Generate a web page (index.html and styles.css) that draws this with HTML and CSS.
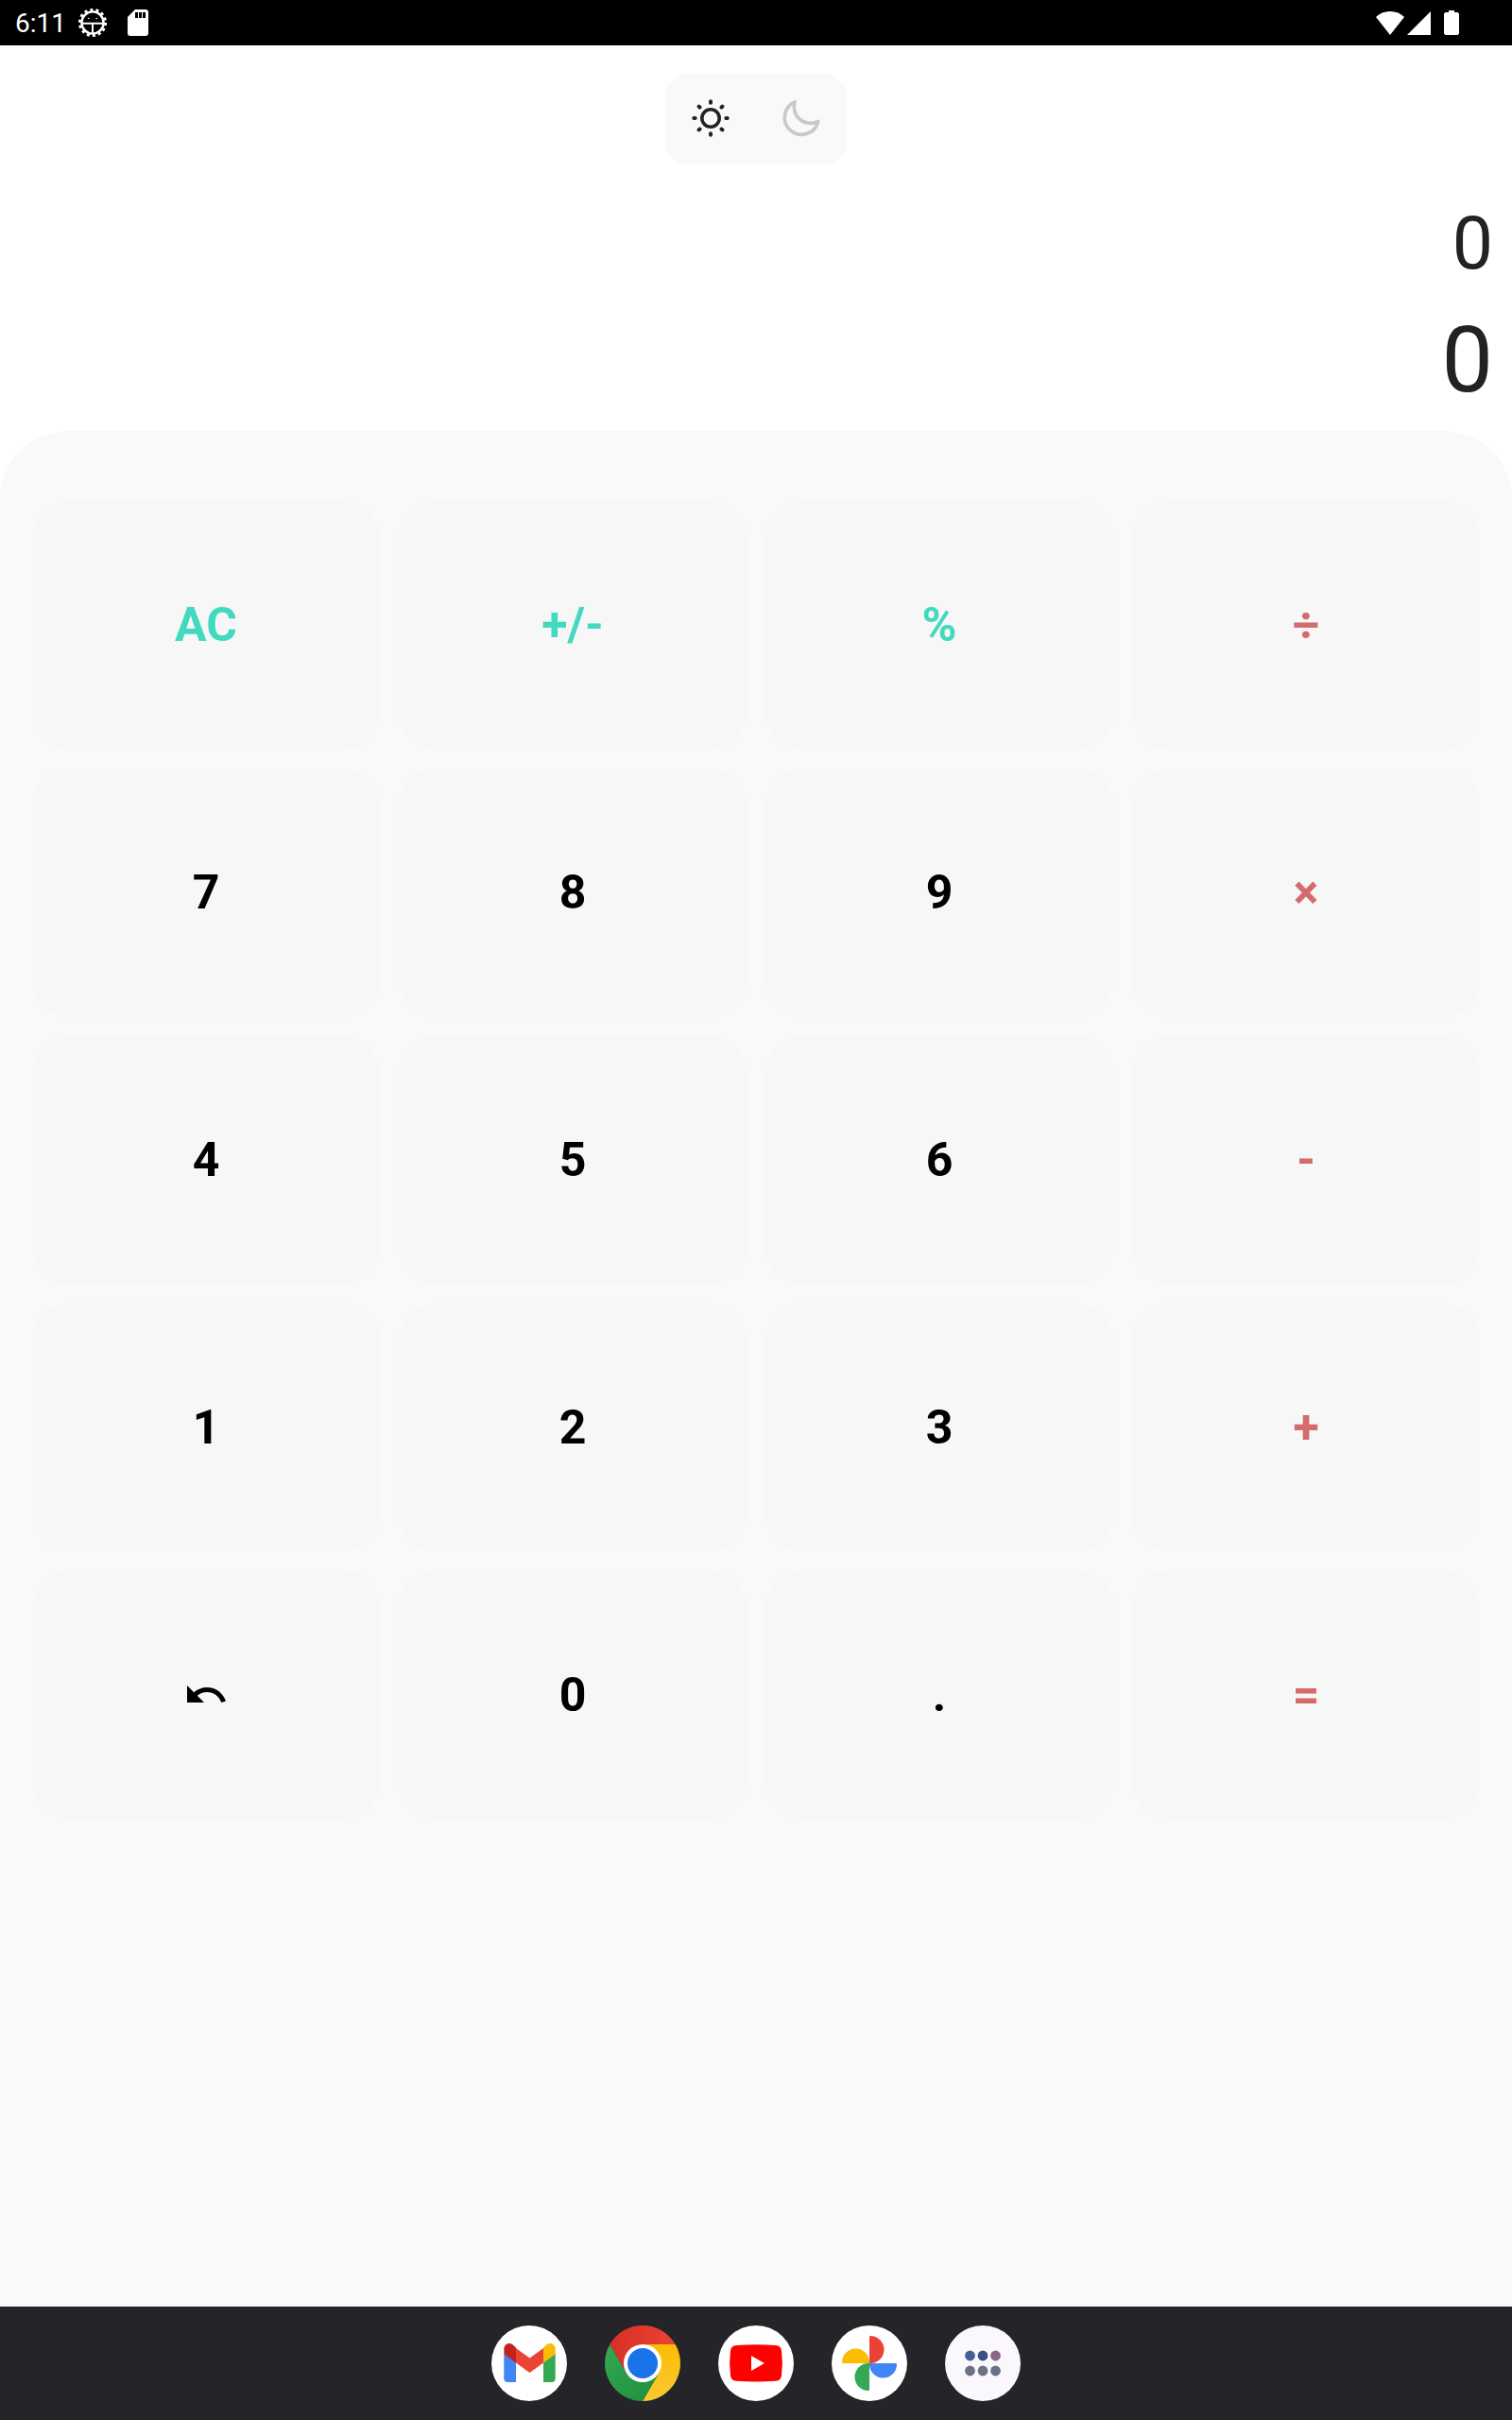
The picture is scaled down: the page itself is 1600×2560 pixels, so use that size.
FILE: index.html
```html
<!DOCTYPE html>
<html lang="en">
<head>
<meta charset="utf-8">
<meta name="viewport" content="width=device-width, initial-scale=1">
<title>Calculator</title>
<link rel="stylesheet" href="styles.css">
</head>
<body>
<header class="status">
  <div class="status-left">
    <time class="clock">6:11</time>
    <svg class="gear" viewBox="0 0 32 32" aria-hidden="true">
      <circle cx="16" cy="16" r="13.6" fill="none" stroke="#fff" stroke-width="3" stroke-dasharray="3 3.103"/>
      <circle cx="16" cy="16" r="11.600" fill="none" stroke="#fff" stroke-width="2.400"/>
      <path d="M5 16.700H27M16 17v10" fill="none" stroke="#fff" stroke-width="2"/>
      <circle cx="11.700" cy="11.500" r=".8" fill="#fff"/><circle cx="20.300" cy="11.500" r=".8" fill="#fff"/>
    </svg>
    <svg class="sd" viewBox="0 0 22 28" aria-hidden="true">
      <path fill="#fff" fill-rule="evenodd" d="M8 0h11a3 3 0 0 1 3 3v22a3 3 0 0 1-3 3H3a3 3 0 0 1-3-3V8zM8 3v6h3V3zM12 3v6h3V3zM16 3v6h3V3z"/>
    </svg>
  </div>
  <div class="status-right">
    <svg class="wifi" viewBox="0 0 30 25" aria-hidden="true"><path fill="#fff" d="M0 6Q6 0 15 0t15 6L15 25z"/></svg>
    <svg class="signal" viewBox="0 0 25 25" aria-hidden="true"><path fill="#fff" d="M25 0v25H0z"/></svg>
    <svg class="battery" viewBox="0 0 16 26" aria-hidden="true"><path fill="#fff" d="M5 0h6v2h3.500L16 3.500v21L14.500 26h-13L0 24.500v-21L1.500 2H5z"/></svg>
  </div>
</header>

<main class="calculator">
  <div class="theme" role="group" aria-label="Theme">
    <button class="theme-option" type="button" aria-label="Light" aria-pressed="true">
      <svg class="icon" viewBox="0 0 48 48" fill="none" stroke="#222" aria-hidden="true">
        <circle cx="24" cy="23" r="9.200" stroke-width="3.600"/>
        <path stroke-width="4" stroke-linecap="round" d="M24 5.300v1.400M24 39.300v1.400M6.300 23h1.400M40.300 23h1.400M11.600 10.600l.9.900M35.500 34.500l.9.900M11.600 35.400l.9-.9M35.500 11.500l.9-.9"/>
      </svg>
    </button>
    <button class="theme-option" type="button" aria-label="Dark" aria-pressed="false">
      <svg class="icon" viewBox="0 0 48 48" fill="none" stroke="#c8c8c8" aria-hidden="true">
        <path stroke-width="3.600" stroke-linejoin="round" d="M17 5.800A18 18 0 1 0 41.800 26.300A17.400 17.400 0 0 1 17 5.800z"/>
      </svg>
    </button>
  </div>
  <div class="display">
    <div class="expression">0</div>
    <output class="result">0</output>
  </div>
  <section class="keypad" aria-label="Keypad">
    <button class="key key-action" type="button">AC</button>
    <button class="key key-action" type="button">+/-</button>
    <button class="key key-action" type="button">%</button>
    <button class="key key-operator" type="button">÷</button>
    <button class="key" type="button">7</button>
    <button class="key" type="button">8</button>
    <button class="key" type="button">9</button>
    <button class="key key-operator" type="button">×</button>
    <button class="key" type="button">4</button>
    <button class="key" type="button">5</button>
    <button class="key" type="button">6</button>
    <button class="key key-operator" type="button">-</button>
    <button class="key" type="button">1</button>
    <button class="key" type="button">2</button>
    <button class="key" type="button">3</button>
    <button class="key key-operator" type="button">+</button>
    <button class="key" type="button" aria-label="Undo">
      <svg class="icon" viewBox="0 0 24 24" aria-hidden="true"><path d="M12.500 8c-2.650 0-5.050.99-6.900 2.600L2 7v9h9l-3.620-3.620c1.390-1.160 3.160-1.880 5.120-1.880 3.540 0 6.550 2.310 7.600 5.500l2.370-.78C21.080 11.030 17.150 8 12.500 8z"/></svg>
    </button>
    <button class="key" type="button">0</button>
    <button class="key" type="button">.</button>
    <button class="key key-operator" type="button">=</button>
  </section>
</main>

<nav class="dock" aria-label="Apps">
  <button class="app" type="button" aria-label="Gmail">
    <svg class="app-icon" viewBox="0 0 80 80" aria-hidden="true">
      <circle cx="40" cy="40" r="40" fill="#fff"/>
      <path fill="#4285f4" d="M13.300 30l12.700 8v22h-8.700a4 4 0 0 1-4-4z"/>
      <path fill="#34a853" d="M67.700 30L55 38v22h8.700a4 4 0 0 0 4-4z"/>
      <path fill="#ea4335" d="M26 24l14.500 10.500L55 24v15.500L40.500 50 26 39.500z"/>
      <path fill="#c5221f" d="M13.300 25c0-5 5.200-7.600 9.200-4.700L26 23.500v16l-12.700-9.200z"/>
      <path fill="#fbbc04" d="M67.700 25c0-5-5.200-7.600-9.200-4.700L55 23.500v16l12.700-9.200z"/>
    </svg>
  </button>
  <button class="app" type="button" aria-label="Chrome">
    <svg class="app-icon" viewBox="0 0 80 80" aria-hidden="true">
      <defs>
        <linearGradient id="red"><stop stop-color="#d93025"/><stop offset="1" stop-color="#ea4335"/></linearGradient>
        <linearGradient id="yellow" x2="0" y2="1"><stop stop-color="#fbbc04"/><stop offset="1" stop-color="#fcc934"/></linearGradient>
        <linearGradient id="green" x2="1" y2="1"><stop stop-color="#34a853"/><stop offset="1" stop-color="#1e8e3e"/></linearGradient>
      </defs>
      <path fill="url(#red)" d="M5.360 20A40 40 0 0 1 74.640 20H40L22.680 50z"/>
      <path fill="url(#yellow)" d="M74.640 20A40 40 0 0 1 40 80L57.320 50 40 20z"/>
      <path fill="url(#green)" d="M40 80A40 40 0 0 1 5.360 20L22.680 50H57.320z"/>
      <circle cx="40" cy="40" r="20" fill="#fff"/><circle cx="40" cy="40" r="16" fill="#1a73e8"/>
    </svg>
  </button>
  <button class="app" type="button" aria-label="YouTube">
    <svg class="app-icon" viewBox="0 0 80 80" aria-hidden="true">
      <circle cx="40" cy="40" r="40" fill="#fff"/>
      <path fill="red" d="M19 21q21-1.500 42 0 5.500.5 6 6 1.800 13 0 26-.5 5.200-6 5.700-21 1.500-42 0-5.500-.5-6-5.700-1.800-13 0-26 .5-5.500 6-6z"/>
      <path fill="#fff" d="M35 32l14 8-14 8z"/>
    </svg>
  </button>
  <button class="app" type="button" aria-label="Photos">
    <svg class="app-icon" viewBox="0 0 80 80" aria-hidden="true">
      <circle cx="40" cy="40" r="40" fill="#fff"/>
      <path fill="#ea4335" d="M40 12q0-1 1-1A14.500 14.500 0 0 1 41 40h-1z"/>
      <path fill="#4285f4" d="M68 40q1 0 1 1A14.500 14.500 0 0 1 40 41v-1z"/>
      <path fill="#34a853" d="M40 68q0 1-1 1A14.500 14.500 0 0 1 39 40h1z"/>
      <path fill="#fbbc04" d="M12 40q-1 0-1-1A14.500 14.500 0 0 1 40 39v1z"/>
    </svg>
  </button>
  <button class="app" type="button" aria-label="All apps">
    <svg class="app-icon" viewBox="0 0 80 80" aria-hidden="true">
      <circle cx="40" cy="40" r="40" fill="#faf8fd"/>
      <circle cx="26.500" cy="32" r="5.400" fill="#485d92"/><circle cx="40" cy="32" r="5.400" fill="#3b4e86"/><circle cx="53.500" cy="32" r="5.400" fill="#8b6788"/>
      <g fill="#6c7286"><circle cx="26.500" cy="48" r="5.400"/><circle cx="40" cy="48" r="5.400"/><circle cx="53.500" cy="48" r="5.400"/></g>
    </svg>
  </button>
</nav>
</body>
</html>
```
FILE: styles.css
```css
* {
  box-sizing: border-box;
}

body {
  display: flex;
  flex-direction: column;
  min-height: 100vh;
  margin: 0;
  background: #fff;
  color: #222;
  font-family: Roboto, sans-serif;
}

button {
  padding: 0;
  border: 0;
  background: none;
  font: inherit;
  cursor: pointer;
}

svg {
  display: block;
}

.status {
  display: flex;
  align-items: center;
  justify-content: space-between;
  height: 48px;
  padding: 0 56px 0 16px;
  background: #000;
  color: #fff;
}

.status-left,
.status-right {
  display: flex;
  align-items: center;
}

.clock {
  margin-right: 12px;
  padding-top: 2px;
  font-size: 28px;
  line-height: 32px;
}

.gear {
  width: 32px;
  height: 32px;
  margin-right: 21px;
}

.sd {
  width: 22px;
  height: 28px;
}

.wifi {
  width: 30px;
  height: 25px;
  margin-right: 3px;
}

.signal {
  width: 25px;
  height: 25px;
  margin-right: 14px;
}

.battery {
  width: 16px;
  height: 26px;
}

.calculator {
  display: flex;
  flex: 1;
  flex-direction: column;
  padding-top: 30px;
}

.theme {
  display: flex;
  align-self: center;
  border-radius: 24px;
  background: #f9f9f9;
}

.theme-option {
  display: grid;
  place-items: center;
  width: 96px;
  height: 96px;
}

.icon {
  width: 48px;
  height: 48px;
}

.display {
  display: flex;
  flex-direction: column;
  align-items: flex-end;
  gap: 23px;
  padding: 40px 20px 19px;
}

.expression {
  font-size: 77px;
  line-height: 88px;
}

.result {
  font-size: 97px;
  line-height: 112px;
}

.keypad {
  display: grid;
  flex: 1;
  grid-template-columns: repeat(4, 1fr);
  align-content: start;
  gap: 20px;
  padding: 74px 34px;
  border-radius: 72px 72px 0 0;
  background: #f9f9f9;
}

.key {
  display: grid;
  place-items: center;
  aspect-ratio: 7 / 5;
  border-radius: 40px;
  background: #f7f7f7;
  color: #000;
  font-size: 50px;
  font-weight: 700;
  line-height: 60px;
}

.key-action {
  color: #43d9be;
}

.key-operator {
  color: #d46c6e;
}

.dock {
  display: flex;
  align-items: center;
  justify-content: center;
  gap: 40px;
  height: 120px;
  background: #242429;
}

.app,
.app-icon {
  width: 80px;
  height: 80px;
}
```
